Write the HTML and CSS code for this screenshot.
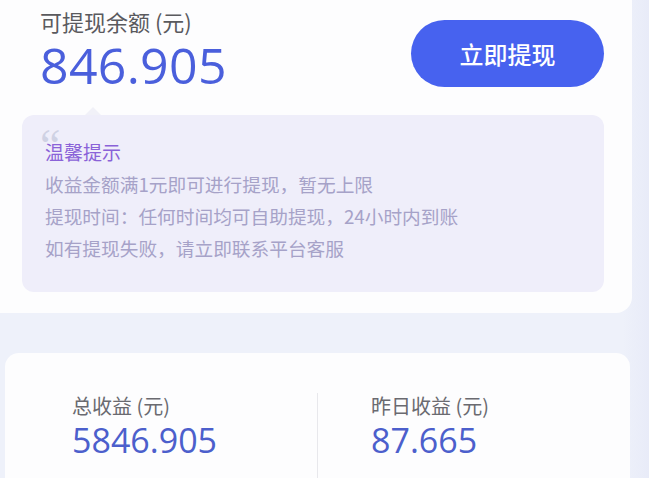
FILE: index.html
```html
<!DOCTYPE html>
<html lang="zh-CN">
<head>
<meta charset="utf-8">
<title>提现</title>
<link rel="stylesheet" href="styles.css">
</head>
<body>
<div class="page">
  <section class="card card-top">
    <div class="head">
      <div class="balance">
        <div class="label">可提现余额 (元)</div>
        <div class="amount">846.905</div>
      </div>
      <button class="withdraw" type="button">立即提现</button>
    </div>
    <div class="tip">
      <span class="quote">“</span>
      <div class="tip-title">温馨提示</div>
      <div class="tip-line">收益金额满1元即可进行提现，暂无上限</div>
      <div class="tip-line">提现时间：任何时间均可自助提现，24小时内到账</div>
      <div class="tip-line">如有提现失败，请立即联系平台客服</div>
    </div>
  </section>
  <section class="card card-stats">
    <div class="stat stat-left">
      <div class="stat-label">总收益 (元)</div>
      <div class="stat-value">5846.905</div>
    </div>
    <div class="divider"></div>
    <div class="stat stat-right">
      <div class="stat-label">昨日收益 (元)</div>
      <div class="stat-value">87.665</div>
    </div>
  </section>
</div>
</body>
</html>
```

FILE: styles.css
```css
html, body {
  margin: 0;
  padding: 0;
  height: 478px;
  overflow: hidden;
}
body {
  background: linear-gradient(90deg, #eef1fa 0%, #eef1fa 96%, #e8ebf8 100%);
  font-family: "Noto Sans CJK SC", "Noto Sans", sans-serif;
}
.page {
  display: flex;
  flex-direction: column;
  gap: 40px;
}
.card {
  background: #fdfdfe;
}
.card-top {
  width: 632px;
  box-sizing: border-box;
  padding: 6px 28px 21px 22px;
  border-radius: 0 0 16px 0;
}
.head {
  display: flex;
  justify-content: space-between;
  align-items: flex-start;
  padding-left: 18px;
}
.label {
  font-size: 22px;
  line-height: 30px;
  color: #5a5a5e;
}
.amount {
  font-family: "Open Sans", "Noto Sans", sans-serif;
  font-size: 50px;
  line-height: 58px;
  color: #4a5fdc;
  letter-spacing: 0.3px;
}
.withdraw {
  margin-top: 14px;
  width: 193px;
  height: 67px;
  border: none;
  border-radius: 34px;
  background: #4762ef;
  color: #ffffff;
  font-family: "Noto Sans CJK SC", sans-serif;
  font-size: 24px;
  font-weight: 500;
  padding: 0;
}
.tip {
  position: relative;
  margin-top: 21px;
  background: #efeefa;
  border-radius: 12px;
  padding: 21px 20px 28px 23px;
}
.tip::before {
  content: "";
  position: absolute;
  left: 63px;
  top: -8px;
  border-left: 8px solid transparent;
  border-right: 8px solid transparent;
  border-bottom: 8px solid #f1f1f8;
}
.quote {
  position: absolute;
  left: 18px;
  top: 8px;
  font-family: "Liberation Serif", serif;
  font-size: 46px;
  line-height: 46px;
  color: #cfd2e4;
}
.tip-title {
  position: relative;
  font-size: 19px;
  line-height: 32px;
  color: #8a62d8;
}
.tip-line {
  font-size: 18.7px;
  line-height: 32px;
  color: #a6a2c8;
}
.card-stats {
  width: 625px;
  margin-left: 5px;
  min-height: 150px;
  border-radius: 14px 14px 0 0;
  display: grid;
  grid-template-columns: 1fr 1px 1fr;
}
.stat {
  padding-top: 39px;
}
.stat-left {
  padding-left: 67px;
}
.stat-right {
  padding-left: 53px;
}
.divider {
  margin-top: 40px;
  background: #e8e8ec;
}
.stat-label {
  font-size: 20px;
  line-height: 28px;
  color: #6a6a70;
}
.stat-value {
  font-family: "Open Sans", "Noto Sans", sans-serif;
  font-size: 34px;
  line-height: 40px;
  color: #4c5fcc;
}
```
